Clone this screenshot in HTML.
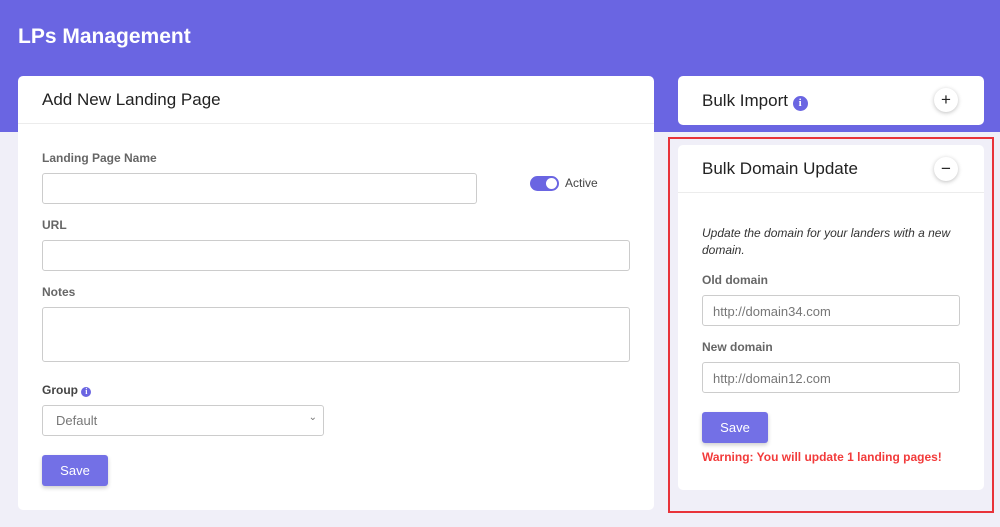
<!DOCTYPE html>
<html><head><style>
*{box-sizing:border-box;margin:0;padding:0}
body{width:1000px;height:527px;background:#f0eff8;font-family:"Liberation Sans",sans-serif;position:relative;overflow:hidden;color:#333}
.top{position:absolute;left:0;top:0;width:1000px;height:132px;background:#6a65e2}
h1{position:absolute;left:18px;top:25px;color:#fff;font-size:21px;font-weight:bold}
.card{position:absolute;background:#fff;border-radius:5px}
.ch{height:48px;border-bottom:1px solid #ececec;padding:14px 24px;font-size:17px;color:#222}
.lbl{position:absolute;font-size:12px;color:#666;font-weight:bold}
.inp{position:absolute;border:1px solid #ccc;border-radius:3px;background:#fff;font-size:13px;color:#777;padding:8px 10px}
.btn{position:absolute;background:#7370e6;color:#fff;font-size:13px;border-radius:3px;text-align:center;box-shadow:0 2px 4px rgba(0,0,0,.2)}
.info{display:inline-block;width:15px;height:15px;border-radius:50%;background:#6a65e2;color:#fff;font-size:11px;font-weight:bold;text-align:center;line-height:15px;font-family:"Liberation Serif",serif;vertical-align:0}
.circ{position:absolute;width:24px;height:24px;border-radius:50%;background:#fff;box-shadow:0 1px 4px rgba(0,0,0,.25);text-align:center;line-height:23px;font-size:17px;color:#222}
</style></head><body>
<div class="top"></div>
<h1>LPs Management</h1>
<div class="card" style="left:18px;top:76px;width:636px;height:434px">
<div class="ch">Add New Landing Page</div>
<div class="lbl" style="left:24px;top:75px">Landing Page Name</div>
<div class="inp" style="left:24px;top:97px;width:435px;height:31px"></div>
<div style="position:absolute;left:512px;top:100px;width:29px;height:15px;border-radius:8px;background:#6a65e2"><div style="position:absolute;right:2px;top:2px;width:11px;height:11px;border-radius:50%;background:#fff"></div></div>
<div style="position:absolute;left:547px;top:100px;font-size:12px;color:#444">Active</div>
<div class="lbl" style="left:24px;top:142px">URL</div>
<div class="inp" style="left:24px;top:164px;width:588px;height:31px"></div>
<div class="lbl" style="left:24px;top:209px">Notes</div>
<div class="inp" style="left:24px;top:231px;width:588px;height:55px"></div>
<div class="lbl" style="left:24px;top:307px;color:#444">Group <span class="info" style="width:10px;height:10px;line-height:10px;font-size:8px">i</span></div>
<div class="inp" style="left:24px;top:329px;width:282px;height:31px;padding:7px 13px">Default<span style="position:absolute;right:6px;top:6px;font-size:10px">&#8964;</span></div>
<div class="btn" style="left:24px;top:379px;width:66px;height:31px;line-height:31px">Save</div>
</div>
<div class="card" style="left:678px;top:76px;width:306px;height:49px">
<div style="padding:15px 24px;font-size:17px;color:#222">Bulk Import <span class="info">i</span></div>
<div class="circ" style="left:256px;top:12px">+</div>
</div>
<div style="position:absolute;left:668px;top:137px;width:326px;height:376px;border:2px solid #e8333a"></div>
<div class="card" style="left:678px;top:145px;width:306px;height:345px">
<div class="ch">Bulk Domain Update</div>
<div class="circ" style="left:256px;top:12px">&minus;</div>
<div style="position:absolute;left:24px;top:80px;width:260px;font-size:12px;font-style:italic;line-height:17px;color:#333">Update the domain for your landers with a new domain.</div>
<div class="lbl" style="left:24px;top:128px">Old domain</div>
<div class="inp" style="left:24px;top:150px;width:258px;height:31px">http://domain34.com</div>
<div class="lbl" style="left:24px;top:195px">New domain</div>
<div class="inp" style="left:24px;top:217px;width:258px;height:31px">http://domain12.com</div>
<div class="btn" style="left:24px;top:267px;width:66px;height:31px;line-height:31px">Save</div>
<div style="position:absolute;left:24px;top:305px;font-size:12px;font-weight:bold;color:#f23b3b">Warning: You will update 1 landing pages!</div>
</div>
</body></html>
